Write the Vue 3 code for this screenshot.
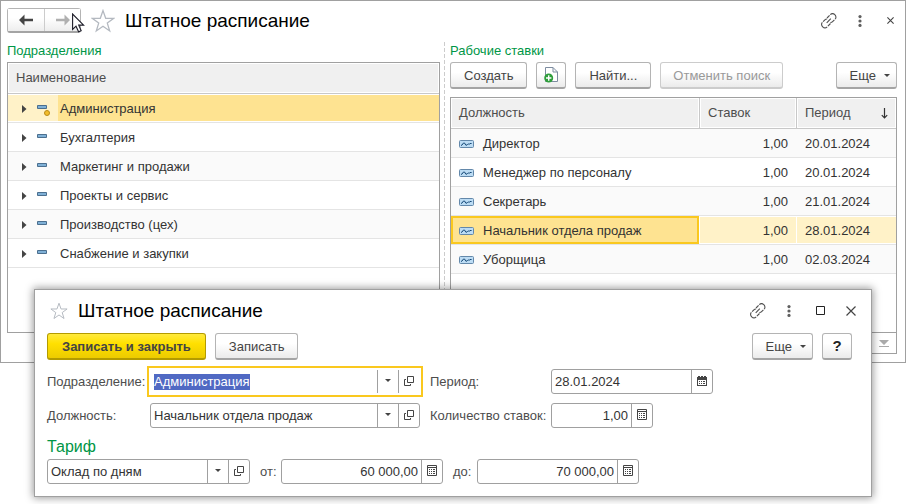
<script setup>
import { onMounted, ref } from 'vue'

const departments = [
  { name: 'Администрация', marked: true },
  { name: 'Бухгалтерия' },
  { name: 'Маркетинг и продажи' },
  { name: 'Проекты и сервис' },
  { name: 'Производство (цех)' },
  { name: 'Снабжение и закупки' },
]
const selectedDepartment = ref('Администрация')

const positions = [
  { name: 'Директор', rates: '1,00', period: '20.01.2024' },
  { name: 'Менеджер по персоналу', rates: '1,00', period: '20.01.2024' },
  { name: 'Секретарь', rates: '1,00', period: '21.01.2024' },
  { name: 'Начальник отдела продаж', rates: '1,00', period: '28.01.2024' },
  { name: 'Уборщица', rates: '1,00', period: '02.03.2024' },
]
const selectedPosition = ref('Начальник отдела продаж')

const form = ref({
  department: 'Администрация',
  position: 'Начальник отдела продаж',
  period: '28.01.2024',
  rates: '1,00',
  tariff: 'Оклад по дням',
  from: '60 000,00',
  to: '70 000,00',
})

const departmentInput = ref(null)
onMounted(() => {
  departmentInput.value.focus({ preventScroll: true })
  departmentInput.value.select()
})
</script>

<template>
  <div class="desktop">
    <svg class="defs" width="0" height="0" aria-hidden="true">
      <symbol id="i-link" viewBox="0 0 16 16">
        <g fill="none" stroke="#505050" stroke-width="1.1">
          <path d="M6 5 8.6 2.3M9.3 1.6C10.5.5 12.400.3 13.800 1.600 15.200 2.900 15.300 5 14.100 6.200M13.400 6.900 11.600 8.700C11 9.300 10.200 9.600 9.400 9.500" />
          <path d="M9.500 10.500 6.900 13.200M6.200 13.900C5 15 3.100 15.200 1.700 13.900.3 12.600.2 10.500 1.400 9.300M2.100 8.600 3.900 6.800C4.500 6.200 5.300 5.900 6.100 6" />
          <path d="M5.700 9.800 9.800 5.700" />
        </g>
      </symbol>
      <symbol id="i-dots" viewBox="0 0 4 12">
        <g fill="#606060"><circle cx="2" cy="1.6" r="1.6" /><circle cx="2" cy="6" r="1.6" /><circle cx="2" cy="10.4" r="1.6" /></g>
      </symbol>
      <symbol id="i-close" viewBox="0 0 10 10">
        <path d="M.5.5l9 9M9.5.5l-9 9" fill="none" stroke="#444" stroke-width="1.2" />
      </symbol>
      <symbol id="i-close-small" viewBox="0 0 7 7">
        <path d="M.4.4 6.6 6.6M6.6.4.4 6.6" fill="none" stroke="#444" stroke-width="1.1" />
      </symbol>
      <symbol id="i-star" viewBox="0 0 24 24">
        <path d="M12 1.6 14.7 9.3H22.8L16.3 14.1 18.7 22 12 17.3 5.3 22 7.7 14.1 1.2 9.3H9.3Z" fill="#fff" stroke="#b4b9c0" stroke-width="1.3" />
      </symbol>
      <symbol id="i-open" viewBox="0 0 10 10">
        <path d="M3.5.5h6v6h-6zM2 3.5H.5v6h6V8" fill="none" stroke="#444" />
      </symbol>
      <symbol id="i-calc" viewBox="0 0 10 11">
        <path d="M.5.5h9v10h-9zM1 2.5h8" fill="none" stroke="#444" />
        <path d="M2 4h1v1H2zM4 4h1v1H4zM6 4h2v1H6zM2 6h1v1H2zM4 6h1v1H4zM6 6h2v1H6zM2 8h1v1H2zM4 8h1v1H4zM6 8h2v1H6z" fill="#444" />
      </symbol>
      <symbol id="i-calendar" viewBox="0 0 10 10">
        <path d="M0 1h1V0h2v1h1V0h2v1h1V0h2v1h1v9H0z" fill="#444" />
        <path d="M1 4h8v5H1z" fill="#fff" />
        <path d="M2 5h1v1H2zM4 5h1v1H4zM6 5h2v1H6zM2 7h1v1H2zM4 7h1v1H4zM6 7h2v1H6z" fill="#444" />
      </symbol>
      <symbol id="i-caret" viewBox="0 0 6 3">
        <path d="M0 0h6L3 3z" fill="#444" />
      </symbol>
    </svg>

    <main class="window">
      <header class="titlebar">
        <div class="nav">
          <button type="button" aria-label="Назад">
            <svg width="14" height="12" viewBox="0 0 14 12"><path d="M0 6 5.5 .5V4.8H14V7.2H5.5V11.5Z" fill="#444" /></svg>
          </button>
          <button type="button" aria-label="Вперед">
            <svg width="14" height="12" viewBox="0 0 14 12"><path d="M14 6 8.5 .5V4.8H0V7.2H8.5V11.5Z" fill="#b0b0b0" /></svg>
          </button>
        </div>
        <button class="plain" type="button" aria-label="Добавить в избранное"><svg width="24" height="24"><use href="#i-star" /></svg></button>
        <h1>Штатное расписание</h1>
        <div class="window-tools">
          <button class="plain" type="button" aria-label="Получить ссылку"><svg width="16" height="16"><use href="#i-link" /></svg></button>
          <button class="plain menu" type="button" aria-label="Меню"><svg width="4" height="12"><use href="#i-dots" /></svg></button>
          <button class="plain" type="button" aria-label="Закрыть"><svg width="7" height="7"><use href="#i-close-small" /></svg></button>
        </div>
      </header>

      <div class="panes">
        <section class="pane">
          <h2>Подразделения</h2>
          <div class="frame tree">
            <table>
              <colgroup><col class="col-toggle" /><col /></colgroup>
              <thead><tr><th colspan="2">Наименование</th></tr></thead>
              <tbody>
                <tr v-for="d in departments" :key="d.name" :class="{ selected: d.name === selectedDepartment }" @click="selectedDepartment = d.name">
                  <td class="toggle">
                    <div>
                      <button class="plain" type="button" :aria-label="'Развернуть: ' + d.name">
                        <svg width="5" height="8" viewBox="0 0 5 8"><path d="M0 0 4.5 4 0 8Z" fill="#444" /></svg>
                      </button>
                      <svg width="14" height="14" viewBox="0 0 14 14">
                        <path d="M.5 3.5h9v3h-9z" fill="#7fb0d6" stroke="#4b6f8f" />
                        <circle v-if="d.marked" cx="10" cy="11" r="2.5" fill="#f2bd2c" stroke="#b98a17" />
                      </svg>
                    </div>
                  </td>
                  <td class="name">{{ d.name }}</td>
                </tr>
              </tbody>
            </table>
          </div>
        </section>

        <div class="splitter"></div>

        <section class="pane">
          <h2>Рабочие ставки</h2>
          <div class="toolbar">
            <button class="btn" type="button">Создать</button>
            <button class="btn icon" type="button" aria-label="Создать копированием">
              <svg width="14" height="16" viewBox="0 0 14 16">
                <path d="M1.5.5H9L13.5 5V14.5H1.5Z" fill="#fff" stroke="#7d8ca0" />
                <path d="M9 .5V5H13.5" fill="none" stroke="#7d8ca0" />
                <circle cx="4.7" cy="11" r="4.5" fill="#2f9e3c" />
                <path d="M4.7 8.3v5.4M2 11h5.4" stroke="#fff" stroke-width="1.4" />
              </svg>
            </button>
            <button class="btn" type="button">Найти...</button>
            <button class="btn" type="button" disabled>Отменить поиск</button>
            <button class="btn more" type="button">Еще <svg width="6" height="3"><use href="#i-caret" /></svg></button>
          </div>
          <div class="frame rates">
            <table>
              <colgroup><col /><col class="col-rates" /><col class="col-period" /></colgroup>
              <thead>
                <tr>
                  <th>Должность</th>
                  <th>Ставок</th>
                  <th>
                    <div class="sorted">Период
                      <svg width="7" height="11" viewBox="0 0 7 11"><path d="M3.5 0V10M.8 7.2 3.5 10 6.2 7.2" fill="none" stroke="#333" stroke-width="1.2" /></svg>
                    </div>
                  </th>
                </tr>
              </thead>
              <tbody>
                <tr v-for="p in positions" :key="p.name" :class="{ selected: p.name === selectedPosition }" @click="selectedPosition = p.name">
                  <td class="post">
                    <div>
                      <svg width="15" height="8" viewBox="0 0 15 8">
                        <rect x=".5" y=".5" width="14" height="7" rx="1" fill="#bcdcf4" stroke="#6388aa" />
                        <path d="M2 5.5 3 5 4.5 3 5.5 3 7 5.4 8.3 4.6 9.3 4 10.3 4.2 11 3.5 12.6 3.5" fill="none" stroke="#174a78" />
                      </svg>
                      {{ p.name }}
                    </div>
                  </td>
                  <td class="num">{{ p.rates }}</td>
                  <td class="date">{{ p.period }}</td>
                </tr>
              </tbody>
            </table>
            <button class="to-end" type="button" aria-label="В конец списка">
              <svg width="10" height="7" viewBox="0 0 10 7"><path d="M0 0H10L5 5ZM0 6h10v1H0z" fill="#aaa" /></svg>
            </button>
          </div>
        </section>
      </div>

      <svg class="cursor" width="13" height="20" viewBox="0 0 13 20">
        <path d="M.6 1V16.4L4 13.2 6.6 18.8 9.2 17.7 6.7 12.1H11.6Z" fill="#fff" stroke="#1c1c28" stroke-width="1.1" />
      </svg>
    </main>

    <section class="dialog" role="dialog" aria-label="Штатное расписание">
      <header class="titlebar">
        <button class="plain" type="button" aria-label="Добавить в избранное"><svg width="18" height="18"><use href="#i-star" /></svg></button>
        <h1>Штатное расписание</h1>
        <div class="window-tools">
          <button class="plain" type="button" aria-label="Получить ссылку"><svg width="16" height="16"><use href="#i-link" /></svg></button>
          <button class="plain menu" type="button" aria-label="Меню"><svg width="4" height="12"><use href="#i-dots" /></svg></button>
          <button class="plain" type="button" aria-label="Развернуть"><svg width="9" height="9" viewBox="0 0 9 9"><path d="M.5.5h8v8h-8z" fill="none" stroke="#222" /></svg></button>
          <button class="plain" type="button" aria-label="Закрыть"><svg width="10" height="10"><use href="#i-close" /></svg></button>
        </div>
      </header>

      <div class="toolbar">
        <button class="btn primary" type="button">Записать и закрыть</button>
        <button class="btn" type="button">Записать</button>
        <button class="btn more" type="button">Еще <svg width="6" height="3"><use href="#i-caret" /></svg></button>
        <button class="btn icon help" type="button">?</button>
      </div>

      <form @submit.prevent>
        <div class="fields">
          <label for="department">Подразделение:</label>
          <div class="field active">
            <input id="department" ref="departmentInput" v-model="form.department" type="text" />
            <button type="button" aria-label="Выбрать из списка"><svg width="6" height="3"><use href="#i-caret" /></svg></button>
            <button type="button" aria-label="Открыть"><svg width="10" height="10"><use href="#i-open" /></svg></button>
          </div>
          <label class="second" for="period">Период:</label>
          <div class="field medium">
            <input id="period" v-model="form.period" type="text" />
            <button type="button" aria-label="Календарь"><svg width="10" height="10"><use href="#i-calendar" /></svg></button>
          </div>

          <label for="position">Должность:</label>
          <div class="field">
            <input id="position" v-model="form.position" type="text" />
            <button type="button" aria-label="Выбрать из списка"><svg width="6" height="3"><use href="#i-caret" /></svg></button>
            <button type="button" aria-label="Открыть"><svg width="10" height="10"><use href="#i-open" /></svg></button>
          </div>
          <label class="second" for="rates">Количество ставок:</label>
          <div class="field short">
            <input id="rates" v-model="form.rates" class="num" type="text" />
            <button type="button" aria-label="Калькулятор"><svg width="10" height="11"><use href="#i-calc" /></svg></button>
          </div>
        </div>

        <h3><label for="tariff">Тариф</label></h3>
        <div class="tariff">
          <div class="field wide">
            <input id="tariff" v-model="form.tariff" type="text" />
            <button type="button" aria-label="Выбрать из списка"><svg width="6" height="3"><use href="#i-caret" /></svg></button>
            <button type="button" aria-label="Открыть"><svg width="10" height="10"><use href="#i-open" /></svg></button>
          </div>
          <label class="second from" for="from">от:</label>
          <div class="field medium">
            <input id="from" v-model="form.from" class="num" type="text" />
            <button type="button" aria-label="Калькулятор"><svg width="10" height="11"><use href="#i-calc" /></svg></button>
          </div>
          <label class="second to" for="to">до:</label>
          <div class="field medium">
            <input id="to" v-model="form.to" class="num" type="text" />
            <button type="button" aria-label="Калькулятор"><svg width="10" height="11"><use href="#i-calc" /></svg></button>
          </div>
        </div>
      </form>
    </section>
  </div>
</template>

<style>
body {
  background: #fff;
}
</style>

<style scoped>
.desktop {
  position: relative;
  min-height: 504px;
  font: 13px/16px "Liberation Sans", Arial, sans-serif;
  color: #333;
}
.desktop * {
  box-sizing: border-box;
}
.defs {
  position: absolute;
}
svg {
  display: block;
  flex: none;
}
button,
input {
  font: inherit;
  color: inherit;
}
h1,
h2,
h3 {
  margin: 0;
  font-weight: normal;
}
.plain {
  display: flex;
  padding: 0;
  border: 0;
  background: none;
}

/* windows */
.window {
  position: relative;
  padding: 0 8px 8px 6px;
  border: 1px solid #a0a0a0;
  background: #fff;
}
.dialog {
  position: absolute;
  top: 289px;
  left: 34px;
  right: 34px;
  padding: 0 12px 12px;
  border: 1px solid #a0a0a0;
  background: #fff;
  box-shadow: 0 0 8px 1px rgba(0, 0, 0, 0.4);
}
.titlebar {
  display: flex;
  align-items: center;
  height: 39px;
  margin-bottom: 2px;
}
.titlebar h1 {
  margin-left: 10px;
  font-size: 19px;
  line-height: 24px;
  color: #000;
}
.window-tools {
  display: flex;
  align-items: center;
  gap: 21px;
  margin-left: auto;
  padding-right: 3px;
}
.menu {
  margin-right: 4px;
}
.nav {
  display: flex;
  margin-right: 10px;
  border: 1px solid #b4b4b4;
  border-bottom: 2px solid #a4a4a4;
  border-radius: 3px;
}
.nav button {
  display: flex;
  align-items: center;
  justify-content: center;
  width: 36px;
  height: 22px;
  padding: 0;
  border: 0;
  background: linear-gradient(#fff 40%, #ededed);
}
.nav button + button {
  border-left: 1px solid #ccc;
}
.cursor {
  position: absolute;
  top: 12px;
  left: 71px;
}

/* panes */
.panes {
  display: grid;
  grid-template-columns: minmax(0, 433fr) 10px minmax(0, 447fr);
  min-height: 312px;
}
.pane {
  display: flex;
  flex-direction: column;
}
.pane h2 {
  height: 20px;
  font-size: 13px;
  line-height: 18px;
  color: #009646;
}
.splitter {
  width: 1px;
  margin-left: 4px;
  background: repeating-linear-gradient(#ccc 0 4px, #fff 4px 6px);
}
.toolbar {
  display: flex;
  gap: 9px;
}
.pane .toolbar {
  margin-bottom: 8px;
}
.btn {
  display: flex;
  align-items: center;
  justify-content: center;
  gap: 8px;
  height: 27px;
  padding: 1px 13px 0;
  border: 1px solid #b4b4b4;
  border-bottom: 2px solid #a4a4a4;
  border-radius: 3px;
  background: linear-gradient(#fff 40%, #ebebeb);
  color: #444;
  white-space: nowrap;
}
.btn:disabled {
  padding-inline: 12px;
  border-color: #ccc;
  color: #999;
}
.btn.icon {
  width: 30px;
  padding: 0;
}
.btn.more {
  padding-right: 6px;
  margin-left: auto;
}
.btn.primary {
  padding-inline: 14px;
  border-color: #b39b00;
  background: linear-gradient(#ffea3d, #ffe000 40%, #eccb00);
  font-weight: bold;
}
.btn.help {
  font-weight: bold;
  font-size: 15px;
  color: #222;
}

/* lists */
.frame {
  display: flex;
  flex: 1;
  flex-direction: column;
  border: 1px solid #a0a0a0;
}
.tree {
  margin-bottom: 21px;
}
table {
  width: 100%;
  table-layout: fixed;
  border-collapse: separate;
  border-spacing: 0;
}
.col-toggle {
  width: 50px;
}
.col-rates {
  width: 97px;
}
.col-period {
  width: 100px;
}
th {
  height: 31px;
  padding: 0 8px;
  border-bottom: 1px solid #c8c8c8;
  background: #f0f0f0;
  box-shadow: inset 0 0 0 1px #fff;
  font-weight: normal;
  text-align: left;
  color: #4d4d4d;
}
th + th {
  border-left: 1px solid #c8c8c8;
}
td {
  height: 29px;
  padding: 2px 8px 0;
  border-bottom: 1px solid #e4e4e4;
}
tbody tr:nth-child(odd) td {
  background: #fafafa;
}
tbody tr.selected td {
  background: #fff2c8;
  box-shadow: inset 0 1px #fff, inset 0 -1px #fff;
}
tbody tr.selected .name {
  background: #fee391;
}
.name {
  padding-left: 2px;
}
.date {
  padding-left: 9px;
}
.toggle {
  padding: 1px 0 0 14px;
}
.toggle div {
  display: flex;
  align-items: center;
  gap: 10px;
}
.post div {
  display: flex;
  align-items: center;
  gap: 9px;
}
.rates tbody tr.selected .post {
  background: #fee391;
  box-shadow: inset 0 0 0 2px #fac81e;
}
.rates tr.selected td + td {
  box-shadow: inset 1px 1px #fff, inset 0 -1px #fff;
}
.num {
  text-align: right;
}
.sorted {
  display: flex;
  align-items: center;
  justify-content: space-between;
}
.to-end {
  display: flex;
  align-items: center;
  justify-content: center;
  align-self: flex-end;
  width: 25px;
  height: 21px;
  margin-top: auto;
  padding: 0;
  border: 0;
  border-top: 1px solid #a0a0a0;
  border-left: 1px solid #a0a0a0;
  background: #fff;
}

/* form */
.dialog .titlebar {
  height: 41px;
  padding-left: 3px;
}
.dialog .toolbar {
  padding-right: 7px;
}
form {
  padding-top: 9px;
}
.fields {
  display: grid;
  grid-template-columns: 103px 270px 131px minmax(0, 1fr);
  row-gap: 9px;
  align-items: center;
}
label {
  color: #4d4d4d;
  white-space: nowrap;
}
.second {
  padding-left: 10px;
}
.field {
  display: flex;
  height: 25px;
  border: 1px solid #a0a0a0;
  border-radius: 3px;
  background: #fff;
}
.field input {
  flex: 1;
  min-width: 0;
  height: 16px;
  margin: 4px 0 0;
  padding: 0 3px;
  border: 0;
  outline: 0;
  background: none;
  line-height: 16px;
}
.field input::selection {
  background: #5069c3;
  color: #fff;
}
.field button {
  display: flex;
  align-items: center;
  justify-content: center;
  width: 21px;
  padding: 0 0 2px;
  border: 0;
  border-left: 1px solid #a0a0a0;
  background: none;
}
.field.active {
  border-color: #fff;
  border-radius: 0;
  outline: 2px solid #fac81e;
  outline-offset: 1px;
}
.field.short {
  width: 102px;
}
.field.medium {
  width: 162px;
}
.field.wide {
  width: 203px;
}
h3 {
  padding: 9px 0 3px;
  font-size: 16px;
  line-height: 19px;
}
h3 label {
  color: #009646;
}
.tariff {
  display: flex;
  align-items: center;
}
.tariff .from {
  width: 31px;
}
.tariff .to {
  width: 34px;
}
</style>
